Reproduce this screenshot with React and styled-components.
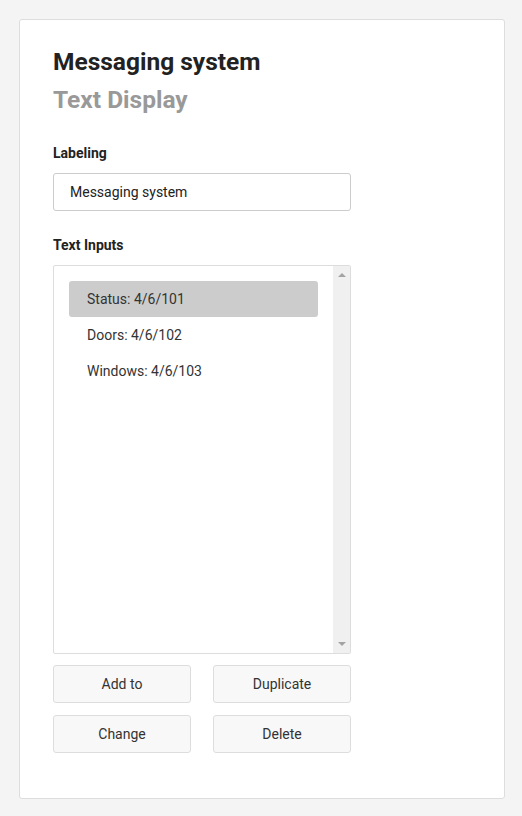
import React, { useState } from 'react'
import styled, { createGlobalStyle } from 'styled-components'

const GlobalStyle = createGlobalStyle`
  body {
    margin: 0;
    background: #f4f4f4;
    font-family: Roboto, "Liberation Sans", Arial, sans-serif;
    color: #222;
  }
`

const inputs = ['Status: 4/6/101', 'Doors: 4/6/102', 'Windows: 4/6/103']

export default function App() {
  const [selected, setSelected] = useState(0)

  return (
    <>
      <GlobalStyle />
      <Page>
        <Card>
          <Title>Messaging system</Title>
          <Subtitle>Text Display</Subtitle>

          <FieldLabel>Labeling</FieldLabel>
          <TextField defaultValue="Messaging system" />

          <FieldLabel>Text Inputs</FieldLabel>
          <ListBox>
            <ListItems>
              {inputs.map((item, i) => (
                <ListItem key={item} $active={i === selected} onClick={() => setSelected(i)}>
                  {item}
                </ListItem>
              ))}
            </ListItems>
            <ScrollTrack>
              <Arrow viewBox="0 0 8 4"><path d="M0 4 L4 0 L8 4 Z" /></Arrow>
              <Arrow viewBox="0 0 8 4"><path d="M0 0 L4 4 L8 0 Z" /></Arrow>
            </ScrollTrack>
          </ListBox>

          <ButtonGrid>
            <Button>Add to</Button>
            <Button>Duplicate</Button>
            <Button>Change</Button>
            <Button>Delete</Button>
          </ButtonGrid>
        </Card>
      </Page>
    </>
  )
}

const Page = styled.div`
  padding: 19px 17px 17px 19px;
`
const Card = styled.div`
  background: #fff;
  border: 1px solid #ddd;
  border-radius: 3px;
  padding: 28px 33px 45px 33px;
  height: 780px;
  box-sizing: border-box;
`
const Title = styled.h1`
  font-size: 24.5px;
  font-weight: 700;
  color: #222;
  margin: 0;
  line-height: 28px;
`
const Subtitle = styled.h2`
  font-size: 24.5px;
  font-weight: 700;
  color: #999;
  margin: 10px 0 0 0;
  line-height: 28px;
`
const FieldLabel = styled.div`
  font-size: 14px;
  font-weight: 700;
  color: #222;
  margin: 31px 0 12px 0;
  line-height: 16px;
`
const TextField = styled.input`
  display: block;
  width: 298px;
  height: 38px;
  box-sizing: border-box;
  border: 1px solid #ccc;
  border-radius: 3px;
  padding: 0 16px;
  font-family: inherit;
  font-size: 14px;
  color: #222;
  outline: none;
  margin-bottom: -5px;
`
const ListBox = styled.div`
  display: flex;
  width: 298px;
  height: 389px;
  margin-top: 1px;
  box-sizing: border-box;
  border: 1px solid #ddd;
  border-radius: 2px;
  overflow: hidden;
`
const ListItems = styled.div`
  flex: 1;
  padding: 15px 15px;
  display: flex;
  flex-direction: column;
`
const ListItem = styled.div`
  height: 36px;
  display: flex;
  align-items: center;
  padding: 0 18px;
  border-radius: 3px;
  font-size: 14px;
  color: #333;
  cursor: pointer;
  background: ${p => (p.$active ? '#cccccc' : 'transparent')};
`
const ScrollTrack = styled.div`
  width: 17px;
  background: #f0f0f0;
  display: flex;
  flex-direction: column;
  justify-content: space-between;
  align-items: center;
  padding: 7px 0;
`
const Arrow = styled.svg`
  width: 8px;
  height: 4px;
  fill: #a3a3a3;
`
const ButtonGrid = styled.div`
  display: grid;
  grid-template-columns: 138px 138px;
  column-gap: 22px;
  row-gap: 12px;
  margin-top: 11px;
`
const Button = styled.button`
  height: 38px;
  background: #f8f8f8;
  border: 1px solid #ddd;
  border-radius: 3px;
  font-family: inherit;
  font-size: 14px;
  color: #333;
  cursor: pointer;
`
